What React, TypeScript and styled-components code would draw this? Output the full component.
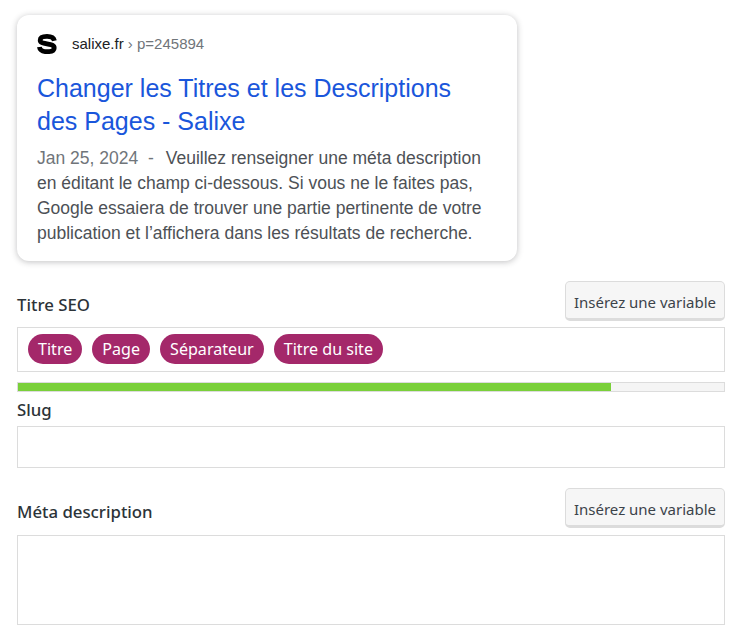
import React from 'react';
import styled, { createGlobalStyle } from 'styled-components';

const GlobalStyle = createGlobalStyle`
    html, body {
        margin: 0;
        padding: 0;
        background: #fff;
    }
`;

const Page = styled.div`
    width: 708px;
    padding: 15px 19px 0 17px;
    font-family: 'Noto Sans', 'Open Sans', sans-serif;
    color: #2c3338;
`;

const PreviewCard = styled.div`
    box-sizing: border-box;
    width: 500px;
    height: 246px;
    padding: 17px 20px 0;
    background: #fff;
    border-radius: 12px;
    box-shadow: 0 1px 6px rgba(32, 33, 36, 0.28);
    font-family: 'Liberation Sans', Arial, sans-serif;
`;

const SiteRow = styled.div`
    display: flex;
    align-items: center;
    height: 24px;
    gap: 15px;
    font-size: 15px;
    color: #202124;
`;

const SiteText = styled.span`
    margin-top: -2px;
`;

const Crumb = styled.span`
    color: #70757a;
`;

const PreviewTitle = styled.div`
    margin-top: 16px;
    font-size: 25px;
    line-height: 33px;
    color: #1a56db;
`;

const PreviewText = styled.div`
    margin-top: 8px;
    font-size: 17.5px;
    line-height: 25px;
    color: #4d5156;
`;

const PreviewDate = styled.span`
    color: #70757a;
    margin-right: 12px;
`;

const LabelRow = styled.div<{ $top: number }>`
    display: flex;
    align-items: center;
    justify-content: space-between;
    height: 40px;
    margin-top: ${(p) => p.$top}px;
`;

const Label = styled.div`
    font-size: 16.8px;
    font-weight: 500;
    line-height: 22px;
`;

const RowLabel = styled(Label)`
    padding-top: 7px;
`;

const VariableButton = styled.button`
    box-sizing: border-box;
    width: 160px;
    height: 40px;
    padding: 4px 0 0;
    background: #f6f6f6;
    border: 1px solid #dcdcdc;
    border-bottom-width: 3px;
    border-radius: 5px;
    font-family: inherit;
    font-size: 15px;
    color: #3c434a;
`;

const Field = styled.div<{ $height: number; $top: number }>`
    box-sizing: border-box;
    height: ${(p) => p.$height}px;
    margin-top: ${(p) => p.$top}px;
    background: #fff;
    border: 1px solid #dcdcdc;
`;

const TagField = styled(Field)`
    display: flex;
    align-items: flex-start;
    gap: 10px;
    padding: 6px 10px 0;
`;

const Tag = styled.span`
    display: flex;
    align-items: center;
    height: 30px;
    padding: 0 10px;
    background: #a4286a;
    border-radius: 15px;
    color: #fff;
    font-size: 16.1px;
`;

const Progress = styled.div`
    box-sizing: border-box;
    height: 10px;
    margin-top: 10px;
    background: #f5f5f5;
    border: 1px solid #dcdcdc;
`;

const ProgressFill = styled.div`
    height: 100%;
`;

const SlugLabel = styled(Label)`
    margin-top: 7px;
`;

const Logo = () => (
    <svg width="20" height="20" viewBox="0 0 20 20" aria-hidden="true">
        <path
            d="M17.4 6.8C16.8 3.8 14 2.4 10 2.4 5.8 2.4 3.2 3.8 3.2 6.2 3.2 8.4 5.6 9 10 9.8 14.8 10.6 17.2 11.4 17.2 13.9 17.2 16.4 14.2 17.7 10 17.7 5.6 17.7 2.9 16.2 2.4 13"
            fill="none"
            stroke="#000"
            strokeWidth="4.8"
        />
    </svg>
);

const App = () => {
    const seoScore = 84;

    return (
        <Page>
            <GlobalStyle />
            <PreviewCard>
                <SiteRow>
                    <Logo />
                    <SiteText>
                        salixe.fr <Crumb>› p=245894</Crumb>
                    </SiteText>
                </SiteRow>
                <PreviewTitle>
                    Changer les Titres et les Descriptions
                    <br />
                    des Pages - Salixe
                </PreviewTitle>
                <PreviewText>
                    <PreviewDate>Jan 25, 2024 &nbsp;-</PreviewDate>
                    Veuillez renseigner une méta description en éditant le champ ci-dessous. Si vous ne le faites pas,
                    Google essaiera de trouver une partie pertinente de votre publication et l’affichera dans les
                    résultats de recherche.
                </PreviewText>
            </PreviewCard>

            <LabelRow $top={20}>
                <RowLabel>Titre SEO</RowLabel>
                <VariableButton>Insérez une variable</VariableButton>
            </LabelRow>
            <TagField $height={45} $top={6}>
                <Tag>Titre</Tag>
                <Tag>Page</Tag>
                <Tag>Séparateur</Tag>
                <Tag>Titre du site</Tag>
            </TagField>
            <Progress>
                <ProgressFill style={{ width: `${seoScore}%`, background: '#7ad03a' }} />
            </Progress>

            <SlugLabel>Slug</SlugLabel>
            <Field $height={42} $top={5} />

            <LabelRow $top={20}>
                <RowLabel>Méta description</RowLabel>
                <VariableButton>Insérez une variable</VariableButton>
            </LabelRow>
            <Field $height={90} $top={7} />
        </Page>
    );
};

export default App;
